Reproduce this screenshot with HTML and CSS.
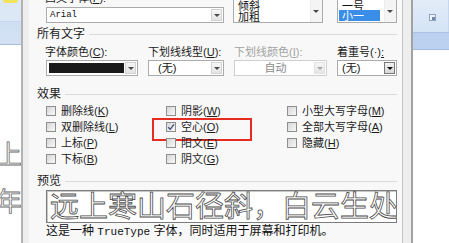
FILE: index.html
```html
<!DOCTYPE html>
<html lang="zh-CN">
<head>
  <meta charset="UTF-8" />
  <title>字体</title>
  <link rel="stylesheet" href="styles.css">
</head>
<body>

<div class="screen">

  <!-- Document behind, left -->
  <div class="doc doc-left">
    <div class="ribbon"><span class="ribbon-mark"></span></div>
    <div class="page">
      <p class="doc-line first">上寒</p>
      <p class="doc-line">年寒</p>
    </div>
  </div>

  <!-- Font dialog -->
  <div class="dialog">
    <div class="panel">

      <div class="font-row">
        <div class="latin">
          <div class="label">西文字体(<u>F</u>):</div>
          <div class="combo">
            <span class="value mono">Arial</span>
            <span class="arrow"></span>
          </div>
        </div>
        <div class="listbox style-list">
          <ul>
            <li>倾斜</li>
            <li>加粗</li>
          </ul>
          <div class="scrollbar"><span class="arrow small"></span></div>
        </div>
        <div class="listbox size-list">
          <ul>
            <li>一号</li>
            <li class="selected">小一</li>
          </ul>
          <div class="scrollbar"><span class="arrow small"></span></div>
        </div>
      </div>

      <div class="section-title"><span>所有文字</span></div>

      <div class="combo-row">
        <div class="group color-group">
          <div class="label">字体颜色(<u>C</u>):</div>
          <div class="combo">
            <span class="swatch"></span>
            <span class="arrow"></span>
          </div>
        </div>
        <div class="group underline-group">
          <div class="label">下划线线型(<u>U</u>):</div>
          <div class="combo">
            <span class="value">(无)</span>
            <span class="arrow"></span>
          </div>
        </div>
        <div class="group ucolor-group disabled">
          <div class="label">下划线颜色(<u>I</u>):</div>
          <div class="combo">
            <span class="value center">自动</span>
            <span class="arrow"></span>
          </div>
        </div>
        <div class="group emphasis-group">
          <div class="label">着重号(·)<u>:</u></div>
          <div class="combo">
            <span class="value">(无)</span>
            <span class="arrow dark"></span>
          </div>
        </div>
      </div>

      <div class="section-title"><span>效果</span></div>

      <div class="effects">
        <div class="check"><span class="box"></span><span>删除线(<u>K</u>)</span></div>
        <div class="check"><span class="box"></span><span>阴影(<u>W</u>)</span></div>
        <div class="check"><span class="box"></span><span>小型大写字母(<u>M</u>)</span></div>

        <div class="check"><span class="box"></span><span>双删除线(<u>L</u>)</span></div>
        <div class="check marked">
          <span class="box">
            <svg width="8" height="8" viewBox="0 0 8 8"><path d="M1.2 4.2 L3.2 6.3 L7 1.3" fill="none" stroke="#3b4c80" stroke-width="1.3"/></svg>
          </span>
          <span>空心(<u>O</u>)</span>
        </div>
        <div class="check"><span class="box"></span><span>全部大写字母(<u>A</u>)</span></div>

        <div class="check"><span class="box"></span><span>上标(<u>P</u>)</span></div>
        <div class="check"><span class="box"></span><span>阳文(<u>E</u>)</span></div>
        <div class="check"><span class="box"></span><span>隐藏(<u>H</u>)</span></div>

        <div class="check"><span class="box"></span><span>下标(<u>B</u>)</span></div>
        <div class="check"><span class="box"></span><span>阴文(<u>G</u>)</span></div>
      </div>

      <div class="section-title"><span>预览</span></div>

      <div class="preview">远上寒山石径斜，白云生处</div>
      <p class="caption">这是一种 <span class="mono">TrueType</span> 字体，同时适用于屏幕和打印机。</p>

    </div>
  </div>

  <!-- Document behind, right -->
  <div class="doc doc-right">
    <div class="ribbon">
      <span class="launcher"></span>
    </div>
    <div class="ribbon-band"></div>
    <div class="page"></div>
  </div>

</div>

</body>
</html>
```

FILE: styles.css
```css
* {
  margin: 0;
  padding: 0;
  box-sizing: border-box;
}

body {
  background: #ffffff;
  font-family: "Liberation Sans", "Noto Sans CJK SC", sans-serif;
  font-size: 11px;
  color: #1c1c1c;
  overflow: hidden;
}

.screen {
  display: flex;
  width: 449px;
  height: 243px;
  overflow: hidden;
}

.mono {
  font-family: "Liberation Mono", "Noto Sans CJK SC", monospace;
}

u {
  text-decoration: underline;
  text-underline-offset: 1px;
}

/* Document behind */
.doc {
  display: flex;
  flex-direction: column;
  background: #ffffff;
}

.doc-left {
  width: 21px;
}

.doc-right {
  width: 36px;
}

.doc-left .ribbon {
  height: 45px;
  background: linear-gradient(#dde8f6 0, #dde8f6 21px, #b9cde8 21px, #cfdff3 22px, #d3e1f3 44px);
  border-bottom: 1px solid #a7bfdf;
  position: relative;
}

.ribbon-mark {
  position: absolute;
  left: 3px;
  top: 0;
  width: 15px;
  height: 3px;
  background: #f1e35a;
  border-radius: 0 0 3px 3px;
}

.page {
  flex: 1;
  background: #ffffff;
  overflow: hidden;
}

.doc-line {
  font-family: "Noto Sans CJK SC", sans-serif;
  font-size: 26px;
  line-height: 26px;
  white-space: nowrap;
  color: #ffffff;
  -webkit-text-stroke: 0.8px #6a6a6a;
  margin-left: -4px;
}

.doc-line.first {
  margin-top: 95px;
  margin-bottom: 21px;
}

.doc-right .ribbon {
  height: 32px;
  background: linear-gradient(#e2ecf8, #d4e3f5);
  border-right: 1px solid #c6d6ec;
  position: relative;
}

.launcher {
  position: absolute;
  left: 16px;
  top: 14px;
  width: 7px;
  height: 7px;
  border: 1px solid #8ea4c2;
  background: #eef3fa;
}

.launcher::after {
  content: "";
  position: absolute;
  right: 0;
  bottom: 0;
  width: 3px;
  height: 3px;
  background: #6f86a8;
}

.ribbon-band {
  height: 18px;
  background: #bcd1ef;
  border-top: 1px solid #a9c2e6;
  border-bottom: 1px solid #a3bce0;
}

/* Dialog */
.dialog {
  display: flex;
  width: 392px;
  height: 243px;
  background: #eeeeee;
  border-left: 2px solid #b2b2b2;
  border-right: 2px solid #a2a2a2;
  padding-left: 6px;
  padding-right: 8px;
}

.panel {
  width: 374px;
  background: #f8f8f8;
  border-right: 1px solid #c4c4c4;
  padding: 0 5px 0 8px;
  margin-top: -20px;
}

.label {
  line-height: 12px;
  white-space: nowrap;
}

.combo {
  display: flex;
  align-items: center;
  height: 16px;
  background: #ffffff;
  border: 1px solid #ababab;
  padding: 0 1px 0 2px;
}

.combo .value {
  flex: 1;
  line-height: 12px;
  color: #111;
}

.combo .value.center {
  text-align: center;
}

.arrow {
  position: relative;
  width: 11px;
  height: 12px;
  border: 1px solid #d2d2d2;
  background: linear-gradient(#f6f6f6, #e4e4e4);
}

.arrow::after {
  content: "";
  position: absolute;
  left: 2px;
  top: 4px;
  border-left: 3px solid transparent;
  border-right: 3px solid transparent;
  border-top: 3px solid #4a4a4a;
}

.arrow.dark {
  border-color: #7a7a7a;
  background: linear-gradient(#f2f2f2, #d8d8d8);
}

.arrow.dark::after {
  border-top-color: #111;
}

.arrow.small {
  border: none;
  background: none;
}

/* Top font row */
.font-row {
  display: flex;
  align-items: flex-end;
  margin-left: 9px;
  height: 43px;
}

.latin {
  width: 178px;
}

.latin .label {
  margin-bottom: 3px;
  margin-left: -1px;
}

.latin .value {
  font-size: 9px;
  padding-left: 1px;
}

.listbox {
  display: flex;
  height: 43px;
  background: #ffffff;
  border: 1px solid #ababab;
  overflow: hidden;
}

.listbox ul {
  list-style: none;
  flex: 1;
  display: flex;
  flex-direction: column;
  justify-content: flex-end;
  padding: 0 0 1px 1px;
}

.listbox li {
  font-size: 11px;
  line-height: 14px;
  height: 11px;
  padding-left: 3px;
  color: #111;
}

.listbox li.selected {
  background: #3a8ee8;
  color: #ffffff;
  margin-right: 4px;
  line-height: 12px;
}

.scrollbar {
  width: 12px;
  display: flex;
  align-items: flex-end;
  padding-bottom: 4px;
  background: #f4f4f4;
  border-left: 1px solid #ececec;
}

.style-list {
  width: 90px;
  margin-left: 9px;
}

.size-list {
  width: 60px;
  margin-left: 14px;
}

/* Section titles */
.section-title {
  display: flex;
  align-items: center;
  font-size: 12px;
  line-height: 14px;
  color: #1c1c1c;
}

.section-title::after {
  content: "";
  flex: 1;
  height: 1px;
  background: #dadada;
  margin-left: 4px;
}

.font-row + .section-title {
  margin-top: 4px;
}

/* Combo row */
.combo-row {
  display: flex;
  margin: 5px 0 0 9px;
}

.group .label {
  margin-bottom: 2px;
}

.color-group {
  width: 92px;
}

.color-group .label {
  margin-left: -1px;
}

.swatch {
  flex: 1;
  height: 10px;
  background: #1a1a1a;
  margin-right: 1px;
}

.underline-group {
  width: 76px;
  margin-left: 10px;
}

.underline-group .value {
  padding-left: 7px;
}

.ucolor-group {
  width: 93px;
  margin-left: 10px;
}

.disabled .label {
  color: #a3a3a3;
}

.disabled .combo {
  border-color: #cfcfcf;
}

.disabled .value {
  color: #8a8a8a;
}

.disabled .arrow {
  border-color: #e2e2e2;
}

.disabled .arrow::after {
  border-top-color: #a8a8a8;
}

.emphasis-group {
  width: 60px;
  margin-left: 10px;
}

.emphasis-group .value {
  padding-left: 2px;
}

.combo-row + .section-title {
  margin-top: 11px;
}

/* Effects */
.effects {
  display: grid;
  grid-template-columns: 120px 121px 1fr;
  grid-auto-rows: 16px;
  margin: 2px 0 0 9px;
}

.check {
  display: flex;
  align-items: center;
  gap: 5px;
  line-height: 12px;
  white-space: nowrap;
  position: relative;
}

.box {
  display: flex;
  align-items: center;
  justify-content: center;
  width: 10px;
  height: 10px;
  border: 1px solid #8e8e8e;
  background: linear-gradient(135deg, #d8d8d8, #f7f7f7);
}

.check.marked::before {
  content: "";
  position: absolute;
  left: -14px;
  top: -1px;
  width: 96px;
  height: 19px;
  border: 2px solid #e52b22;
}

.effects + .section-title {
  margin-top: 7px;
}

/* Preview */
.preview {
  margin: 2px 0 0 9px;
  height: 33px;
  border: 1px solid #7c7c7c;
  box-shadow: inset 1px 1px 0 #c8c8c8;
  background: #ffffff;
  font-family: "Noto Sans CJK SC", sans-serif;
  font-size: 29px;
  line-height: 26px;
  padding-left: 3px;
  white-space: nowrap;
  overflow: hidden;
  color: #ffffff;
  -webkit-text-stroke: 0.8px #4d4d4d;
}

.caption {
  margin: 2px 0 0 9px;
  font-size: 12px;
  line-height: 12px;
  color: #111;
  white-space: nowrap;
}

.caption .mono {
  font-size: 11px;
}
```
